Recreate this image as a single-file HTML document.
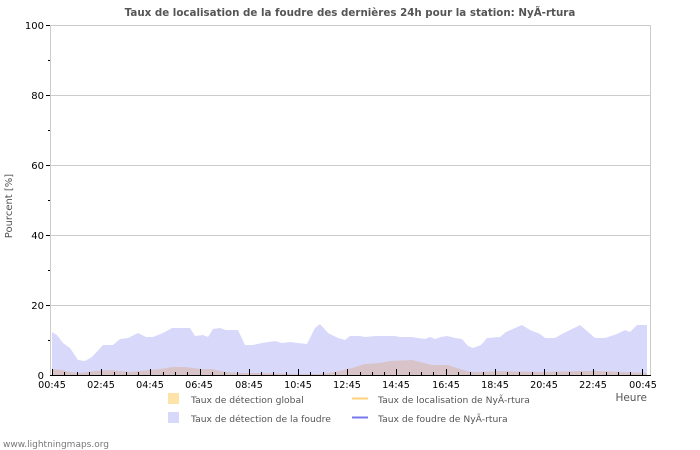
<!DOCTYPE html>
<html><head><meta charset="utf-8"><style>
body{margin:0;background:#fff;width:700px;height:450px;overflow:hidden}
svg{display:block;font-family:"DejaVu Sans","Liberation Sans",sans-serif}
</style></head><body>
<svg width="700" height="450" viewBox="0 0 700 450">
<text x="350" y="16" text-anchor="middle" font-size="10.3" font-weight="bold" fill="#555">Taux de localisation de la foudre des dernières 24h pour la station: NyÃ-rtura</text>
<g stroke="#ccc" stroke-width="1">
<line x1="51" y1="25.5" x2="650" y2="25.5"/>
<line x1="51" y1="95.5" x2="650" y2="95.5"/>
<line x1="51" y1="165.5" x2="650" y2="165.5"/>
<line x1="51" y1="235.5" x2="650" y2="235.5"/>
<line x1="51" y1="305.5" x2="650" y2="305.5"/>
<line x1="650.5" y1="25" x2="650.5" y2="375"/>
<line x1="50.5" y1="25" x2="50.5" y2="375"/>
</g>
<polygon fill="#d8d8fb" points="52,375 52,332 57,335 63,343 70,348 78,360 85,361 92,357 103,345 113,345 120,339 128,338 138,333 146,337 153,337 163,333 172,328 190,328 195,336 203,335 208,337 213,329 220,328 226,330 238,330 245,345 253,345 262,343 275,341 282,343 290,342 298,343 307,344 315,328 320,324 328,333 338,338 345,340 350,336 360,336 365,337 375,336 385,336 395,336 400,337 412,337 418,338 425,339 430,337 435,339 441,337 447,336 455,338 462,339 468,346 473,348 481,345 487,338 500,337 506,332 515,328 522,325 530,330 540,334 545,338 555,338 562,334 570,330 580,325 587,331 595,338 605,338 617,334 625,330 630,332 637,325 647,325 647,375"/>
<polygon fill="#d8c4c8" points="52,375 52,369 62,370 70,372 80,373 95,371 110,370 130,372 150,370 160,369 172,367 185,367 200,369 212,369 225,372 240,373 260,373 300,374 320,374 335,372 352,368 365,364 380,363 390,361 412,360 420,362 432,365 448,365 460,369 470,372 480,372 500,371 540,372 580,371 600,371 620,372 647,373 647,375"/>
<line x1="50" y1="375.5" x2="651" y2="375.5" stroke="#000"/>
<g stroke="#000">
<line x1="46" y1="25.5" x2="50" y2="25.5"/><line x1="48" y1="60.5" x2="50" y2="60.5"/>
<line x1="46" y1="95.5" x2="50" y2="95.5"/><line x1="48" y1="130.5" x2="50" y2="130.5"/>
<line x1="46" y1="165.5" x2="50" y2="165.5"/><line x1="48" y1="200.5" x2="50" y2="200.5"/>
<line x1="46" y1="235.5" x2="50" y2="235.5"/><line x1="48" y1="270.5" x2="50" y2="270.5"/>
<line x1="46" y1="305.5" x2="50" y2="305.5"/><line x1="48" y1="340.5" x2="50" y2="340.5"/>
</g>
<g font-size="10" fill="#000" text-anchor="end">
<text x="44" y="29">100</text><text x="44" y="99">80</text><text x="44" y="169">60</text>
<text x="44" y="239">40</text><text x="44" y="309">20</text><text x="44" y="379">0</text>
</g>
<g id="ticks" stroke="#000"></g>
<g font-size="9.6" fill="#000" text-anchor="middle">
<text x="52" y="388">00:45</text><text x="101" y="388">02:45</text><text x="150" y="388">04:45</text>
<text x="199" y="388">06:45</text><text x="249" y="388">08:45</text><text x="298" y="388">10:45</text>
<text x="347" y="388">12:45</text><text x="396" y="388">14:45</text><text x="446" y="388">16:45</text>
<text x="495" y="388">18:45</text><text x="544" y="388">20:45</text><text x="593" y="388">22:45</text>
<text x="643" y="388">00:45</text>
</g>
<text x="12" y="206" font-size="10" fill="#555" text-anchor="middle" transform="rotate(-90 12 206)">Pourcent   [%]</text>
<text x="647" y="401" font-size="10.5" fill="#555" text-anchor="end">Heure</text>
<rect x="168" y="393" width="11" height="11" fill="#fde3a8"/>
<text x="191" y="403" font-size="9.2" fill="#555">Taux de détection global</text>
<rect x="168" y="412" width="11" height="11" fill="#d8d8fb"/>
<text x="191" y="422" font-size="9.2" fill="#555">Taux de détection de la foudre</text>
<line x1="352" y1="398.5" x2="368" y2="398.5" stroke="#fdd17a" stroke-width="2"/>
<text x="378" y="403" font-size="9.2" fill="#555">Taux de localisation de NyÃ-rtura</text>
<line x1="352" y1="417.5" x2="368" y2="417.5" stroke="#7777ee" stroke-width="2"/>
<text x="378" y="422" font-size="9.2" fill="#555">Taux de foudre de NyÃ-rtura</text>
<text x="3" y="447" font-size="9" fill="#777">www.lightningmaps.org</text>
</svg>
<script>
var g=document.getElementById('ticks'),s='';
for(var i=0;i<=48;i++){var x=52+i*12.3;var big=i%4==0;s+='<line x1="'+(Math.round(x)+.5)+'" y1="'+(big?369:372)+'" x2="'+(Math.round(x)+.5)+'" y2="375"/>';}
g.innerHTML=s;
</script>
</body></html>
